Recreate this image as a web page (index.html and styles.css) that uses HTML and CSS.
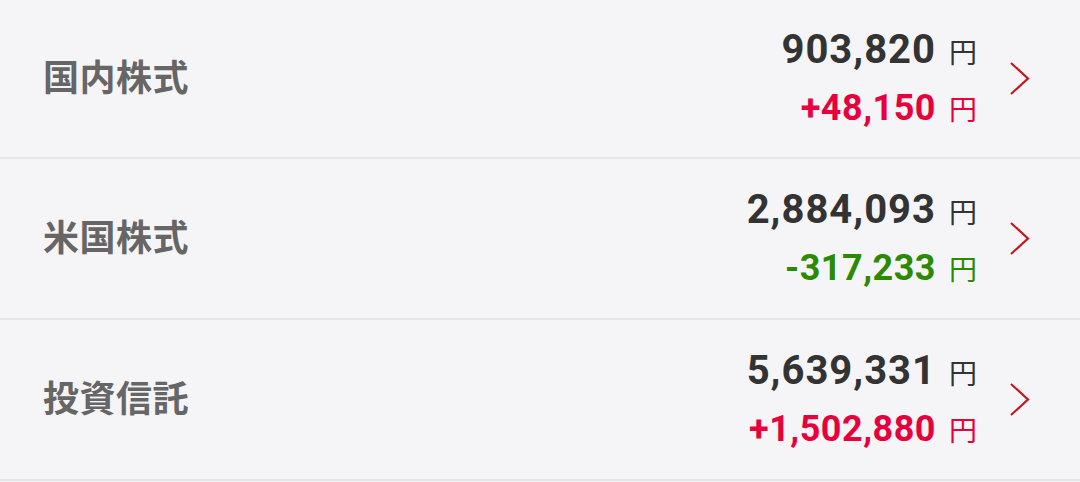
FILE: index.html
```html
<!DOCTYPE html>
<html lang="ja">
<head>
<meta charset="utf-8">
<link rel="stylesheet" href="styles.css">
</head>
<body>
<div class="list">
  <div class="row">
    <div class="label">国内株式</div>
    <div class="values">
      <div class="line total"><span class="num">903,820</span><span class="yen">円</span></div>
      <div class="line plus"><span class="num">+48,150</span><span class="yen">円</span></div>
    </div>
    <svg class="chev" width="24" height="36" viewBox="0 0 24 36"><polyline points="3,2 20,17.5 3,33" fill="none" stroke="#c8141e" stroke-width="2.2"/></svg>
  </div>
  <div class="row">
    <div class="label">米国株式</div>
    <div class="values">
      <div class="line total"><span class="num">2,884,093</span><span class="yen">円</span></div>
      <div class="line minus"><span class="num">-317,233</span><span class="yen">円</span></div>
    </div>
    <svg class="chev" width="24" height="36" viewBox="0 0 24 36"><polyline points="3,2 20,17.5 3,33" fill="none" stroke="#c8141e" stroke-width="2.2"/></svg>
  </div>
  <div class="row">
    <div class="label">投資信託</div>
    <div class="values">
      <div class="line total"><span class="num">5,639,331</span><span class="yen">円</span></div>
      <div class="line plus"><span class="num">+1,502,880</span><span class="yen">円</span></div>
    </div>
    <svg class="chev" width="24" height="36" viewBox="0 0 24 36"><polyline points="3,2 20,17.5 3,33" fill="none" stroke="#c8141e" stroke-width="2.2"/></svg>
  </div>
</div>
</body>
</html>
```

FILE: styles.css
```css
html, body {
  margin: 0;
  padding: 0;
  background: #f5f5f7;
}
body {
  width: 1080px;
  height: 482px;
  overflow: hidden;
  font-family: Roboto, "Noto Sans CJK JP", sans-serif;
}
.list {
  display: flex;
  flex-direction: column;
}
.row {
  display: flex;
  align-items: center;
  height: 157px;
  border-bottom: 2px solid #e6e6e8;
  padding-left: 43px;
  padding-right: 48px;
}
.row + .row {
  height: 159px;
}
.label {
  flex: 1;
  font-family: "Noto Sans CJK JP", sans-serif;
  font-weight: 700;
  font-size: 36px;
  color: #666666;
  letter-spacing: 0.5px;
  padding-bottom: 8px;
}
.values {
  display: flex;
  flex-direction: column;
  align-items: flex-end;
  margin-right: 31px;
}
.line {
  display: flex;
  align-items: baseline;
  height: 58px;
  line-height: 58px;
}
.num {
  font-family: Roboto, sans-serif;
  font-weight: 700;
}
.total .num {
  font-size: 40px;
  letter-spacing: 1px;
  color: #333333;
}
.plus .num, .minus .num {
  font-size: 36px;
  letter-spacing: 0.5px;
}
.plus { color: #e8003c; }
.minus { color: #2b8a00; }
.yen {
  font-family: "Noto Sans CJK JP", sans-serif;
  font-size: 28px;
  margin-left: 13px;
}
.total .yen { color: #333333; }
.chev {
  display: block;
}
```
